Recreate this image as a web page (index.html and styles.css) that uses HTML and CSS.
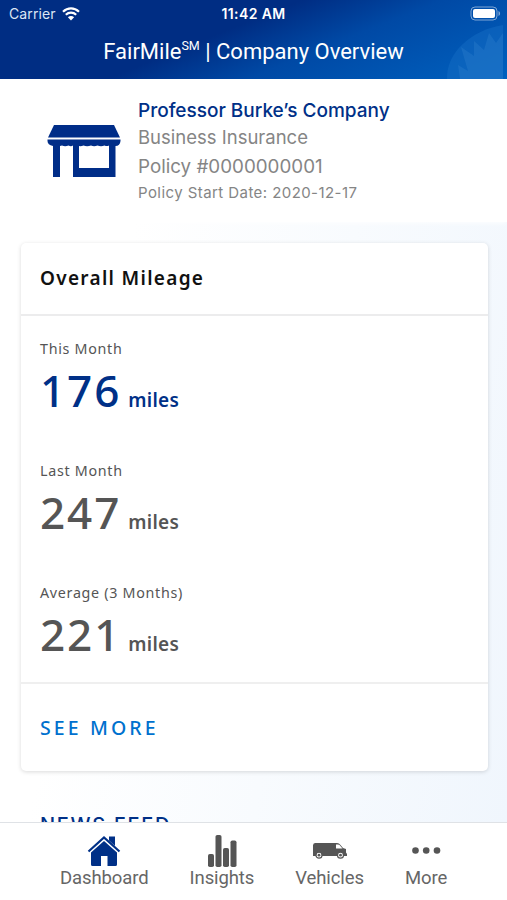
FILE: index.html
```
<!DOCTYPE html>
<html lang="en">
<head>
<meta charset="UTF-8" />
<meta name="viewport" content="width=device-width, initial-scale=1" />
<title>FairMile - Company Overview</title>
<link rel="stylesheet" href="styles.css">
</head>
<body>

<header class="topbar">
  <svg class="eagle" viewBox="0 0 60 54">
    <path class="eagle-disc" d="M1 54C0 28 25 5 57 0V54Z" />
    <path class="eagle-wing" d="M14 54L12 40L22 46L15 22L28 31L28 16L38 25L43 8L50 18L57 8V54Z" />
  </svg>
  <div class="status">
    <div class="carrier">
      <span>Carrier</span>
      <svg class="wifi" width="18" height="14" viewBox="0 0 18 14">
        <path d="M1 4.7C5.7 0.3 12.3 0.3 17 4.7M3.8 7.8C6.8 5 11.2 5 14.2 7.8" />
        <path class="dot" d="M9 13.5L5.9 10.3C7.6 8.7 10.4 8.7 12.1 10.3Z" />
      </svg>
    </div>
    <div class="time">11:42 AM</div>
    <svg class="battery" width="31" height="15" viewBox="0 0 31 15">
      <rect class="outline" x="1" y="1" width="26" height="13" rx="4" />
      <rect class="level" x="3" y="3" width="22" height="9" rx="2" />
      <path class="tip" d="M28.5 5C30.6 6 30.6 9 28.5 10Z" />
    </svg>
  </div>
  <h1 class="title">FairMile<sup>SM</sup> | Company Overview</h1>
</header>

<main class="content">
  <section class="company">
    <svg class="store" width="74" height="53" viewBox="0 0 74 53">
      <path d="M7 0H67L73 12.5H1Z" />
      <path d="M0.5 14.5H73.5V16Q73 21 68.5 21V52H26V20.5Q24 22 21.5 20.5Q18 22 15 20.5L13 21V52H6V21Q0.5 20 0.5 16ZM32 21V43H62V20.5Q60 21.5 57.5 20.5Q54 22 50.5 20.5Q47 22 44 20.5Q40 22 36.5 20.5Q34 21.5 32 21Z" fill-rule="evenodd" />
    </svg>
    <div class="company-info">
      <h2 class="company-name">Professor Burke’s Company</h2>
      <p class="kind">Business Insurance</p>
      <p class="policy">Policy #0000000001</p>
      <p class="start">Policy Start Date: 2020-12-17</p>
    </div>
  </section>

  <section class="card">
    <h3 class="card-title">Overall Mileage</h3>
    <div class="stats">
      <div class="stat current">
        <div class="label">This Month</div>
        <div class="value"><span class="number">176</span><span class="unit">miles</span></div>
      </div>
      <div class="stat">
        <div class="label">Last Month</div>
        <div class="value"><span class="number">247</span><span class="unit">miles</span></div>
      </div>
      <div class="stat">
        <div class="label">Average (3 Months)</div>
        <div class="value"><span class="number">221</span><span class="unit">miles</span></div>
      </div>
    </div>
    <a class="see-more" href="#">SEE MORE</a>
  </section>

  <h3 class="news">NEWS FEED</h3>
</main>

<nav class="tabs">
  <a class="tab active" href="#">
    <svg width="34" height="34" viewBox="0 0 34 34">
      <path class="roof" d="M1.5 17.5L17 3.5L32.5 17.5" />
      <path d="M22 2.500H28V12L22 6.500Z" />
      <path d="M17 7L30 18.500V30.500Q30 32 28.500 32H20.500V22H14V32H5.500Q4 32 4 30.500V18.500Z" />
    </svg>
    <span>Dashboard</span>
  </a>
  <a class="tab" href="#">
    <svg width="30" height="34" viewBox="0 0 30 34">
      <rect x="1" y="20" width="6" height="13" rx="1.8" />
      <rect x="8.5" y="1" width="6" height="32" rx="1.8" />
      <rect x="16" y="14" width="6" height="19" rx="1.8" />
      <rect x="23.5" y="6.5" width="6" height="26.5" rx="1.8" />
    </svg>
    <span>Insights</span>
  </a>
  <a class="tab" href="#">
    <svg width="36" height="34" viewBox="0 0 36 34">
      <path d="M3 9H25Q27 9 28.5 11L31 14L34 15V18.5L35 20V22H1V11.5Q1 9 3 9ZM24 10.5V14.5H30.5L27.5 11Q27 10.500 26 10.500Z" fill-rule="evenodd" />
      <circle class="wheel" cx="7" cy="21.2" r="3" />
      <circle class="wheel" cx="28.5" cy="21.2" r="3" />
      <circle cx="7" cy="21.2" r="1.4" />
      <circle cx="28.5" cy="21.2" r="1.4" />
    </svg>
    <span>Vehicles</span>
  </a>
  <a class="tab" href="#">
    <svg width="30" height="34" viewBox="0 0 30 34">
      <circle cx="4.5" cy="16.5" r="3.3" />
      <circle cx="15.2" cy="16.5" r="3.3" />
      <circle cx="26" cy="16.5" r="3.3" />
    </svg>
    <span>More</span>
  </a>
</nav>

</body>
</html>
```
FILE: styles.css
```
* {
  box-sizing: border-box;
}
body {
  display: flex;
  flex-direction: column;
  height: 900px;
  margin: 0;
  overflow: hidden;
  background: #fff;
  color: #555;
  font-family: Inter, sans-serif;
}
h1, h2, h3, p {
  margin: 0;
  font-weight: 400;
}
a {
  text-decoration: none;
}

/* header */
.topbar {
  position: relative;
  flex: none;
  height: 79px;
  background: linear-gradient(158deg, #002d83 0%, #002d83 43%, #0049a5 63%, #0061bf 100%);
  color: #fff;
}
.eagle {
  position: absolute;
  right: 1px;
  bottom: 0;
  width: 60px;
  height: 54px;
}
.eagle-disc {
  fill: #176fc5;
  opacity: 0.45;
}
.eagle-wing {
  fill: #3182cf;
  opacity: 0.35;
}
.status {
  position: relative;
  display: grid;
  grid-template-columns: 1fr auto 1fr;
  align-items: center;
  height: 27px;
  padding: 0 6px 0 9px;
  font-size: 14px;
}
.carrier {
  display: flex;
  align-items: center;
  gap: 6px;
  color: #dce5f4;
  letter-spacing: 0.1px;
}
.wifi {
  fill: none;
  stroke: #fff;
  stroke-width: 2.2;
}
.wifi .dot {
  fill: #fff;
  stroke: none;
}
.time {
  margin-right: 3px;
  font-size: 14px;
  font-weight: 600;
  letter-spacing: 0.4px;
}
.battery {
  justify-self: end;
}
.battery .outline {
  fill: none;
  stroke: #7ea6d5;
}
.battery .level {
  fill: #fff;
}
.battery .tip {
  fill: #7ea6d5;
}
.title {
  position: relative;
  height: 49px;
  font-family: Roboto, sans-serif;
  font-size: 22px;
  line-height: 50px;
  text-align: center;
  white-space: nowrap;
}
.title sup {
  font-size: 12.5px;
  line-height: 0;
  vertical-align: 9px;
}

/* page */
.content {
  flex: 1;
  min-height: 0;
  overflow: hidden;
  background: linear-gradient(100deg, #fff 0%, #fff 25%, #f8fbfe 60%, #f0f6fd 100%);
}
.company {
  display: flex;
  height: 143px;
  padding: 18px 0 0 47px;
  background: #fff;
  box-shadow: 0 1px 5px rgba(255, 255, 255, 0.9);
}
.store {
  flex: none;
  margin: 28px 17px 0 0;
  fill: #002d88;
}
.company-info {
  color: #858585;
  white-space: nowrap;
}
.company-name {
  color: #003087;
  font-size: 19px;
  font-weight: 500;
  line-height: 27px;
}
.kind {
  font-size: 18.5px;
  line-height: 27px;
}
.policy {
  font-size: 18.8px;
  line-height: 31px;
}
.start {
  font-size: 15px;
  line-height: 21px;
  letter-spacing: 0.43px;
}
.card {
  margin: 21px 19px 0 21px;
  height: 528px;
  border-radius: 5px;
  background: #fff;
  box-shadow: 0 1px 4px rgba(0, 0, 0, 0.15);
  font-family: "Noto Sans", sans-serif;
}
.card-title {
  height: 73px;
  padding-left: 19px;
  border-bottom: 2px solid #ececed;
  color: #111;
  font-size: 19px;
  font-weight: 600;
  line-height: 70px;
  letter-spacing: 1.3px;
}
.stats {
  height: 368px;
  padding: 22px 19px 0;
  border-bottom: 2px solid #efefef;
}
.stat {
  height: 122px;
}
.label {
  font-size: 14.3px;
  line-height: 22px;
  letter-spacing: 0.7px;
}
.value {
  display: flex;
  align-items: baseline;
  gap: 7px;
  height: 62px;
  line-height: 60px;
}
.number {
  font-size: 44px;
  font-weight: 500;
  letter-spacing: 1.9px;
}
.unit {
  font-size: 19px;
  font-weight: 600;
  letter-spacing: 0.3px;
}
.current .value {
  color: #003087;
}
.see-more {
  display: block;
  padding-left: 19px;
  color: #0071ce;
  font-size: 19.5px;
  font-weight: 500;
  line-height: 88px;
  letter-spacing: 3.1px;
}
.news {
  padding: 40px 0 0 40px;
  color: #003087;
  font-size: 20px;
  font-weight: 500;
  line-height: 28px;
  letter-spacing: 1.7px;
}

/* bottom tabs */
.tabs {
  display: flex;
  flex: none;
  gap: 41px;
  height: 78px;
  padding: 11px 0 0 60px;
  border-top: 1px solid #dfe2e6;
  background: #fff;
}
.tab {
  display: flex;
  flex-direction: column;
  align-items: center;
  color: #666;
  font-family: Roboto, sans-serif;
  font-size: 18.5px;
  line-height: 21px;
  letter-spacing: -0.1px;
}
.tab svg {
  fill: #555;
}
.tab.active svg {
  fill: #003087;
}
.tab .roof {
  fill: none;
  stroke: #003087;
  stroke-width: 2.2;
}
.tab .wheel {
  fill: #fff;
  stroke: #555;
  stroke-width: 1.2;
}
```
